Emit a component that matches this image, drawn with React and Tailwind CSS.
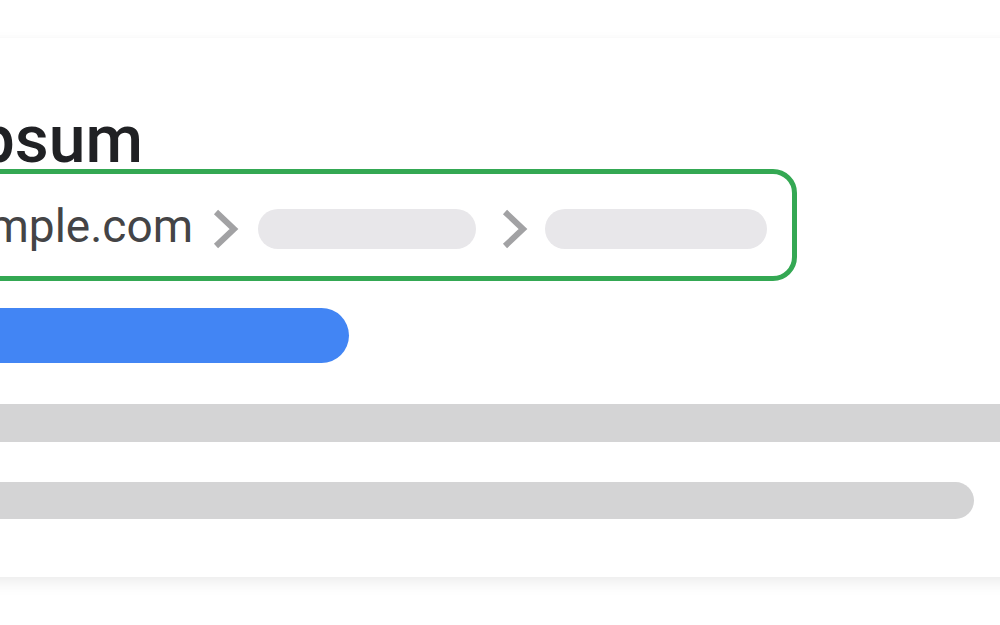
import React from 'react'

const Chevron = ({ className }) => (
  <svg width="26" height="40" viewBox="0 0 26 40" className={className} fill="none">
    <path d="M3 3 L21 20 L3 37" stroke="#a2a2a4" strokeWidth="6" />
  </svg>
)

const App = () => {
  return (
    <div className="w-[1000px] h-[625px] overflow-hidden bg-white pt-[38px]" style={{ fontFamily: 'Roboto, "Noto Sans", sans-serif' }}>
      {/* Result card */}
      <div className="-ml-[200px] w-[1400px] h-[539px] bg-white shadow-[0_6px_14px_rgba(0,0,0,0.07),0_0_5px_rgba(0,0,0,0.025)] flex flex-col pt-[74px]">
        {/* Title */}
        <div className="flex justify-end w-[343px]">
          <h1 className="whitespace-nowrap text-[66px] leading-[56px] text-[#202124] font-medium">Lorem ipsum</h1>
        </div>

        {/* Breadcrumb, highlighted */}
        <div className="ml-[170px] mt-[1px] w-[827px] h-[112px] border-[5px] border-[#34a853] rounded-[24px] flex items-center pt-[7px]">
          <div className="flex justify-end w-[218px] shrink-0">
            <span className="whitespace-nowrap text-[46px] leading-[40px] text-[#444446] pb-[6px]">www.example.com</span>
          </div>
          <Chevron className="ml-[20px] shrink-0" />
          <div className="ml-[19px] w-[218px] h-[40px] rounded-full bg-[#e8e7ea] shrink-0" />
          <Chevron className="ml-[26px] shrink-0" />
          <div className="ml-[17px] w-[222px] h-[40px] rounded-full bg-[#e8e7ea] shrink-0" />
        </div>

        {/* Link bar */}
        <div className="mt-[27px] w-[549px] h-[55px] rounded-full bg-[#4285f4]" />

        {/* Snippet lines */}
        <div className="mt-[41px] w-full h-[38px] bg-[#d4d4d5]" />
        <div className="mt-[40px] w-[1174px] h-[37px] rounded-full bg-[#d4d4d5]" />
      </div>
    </div>
  )
}

export default App
